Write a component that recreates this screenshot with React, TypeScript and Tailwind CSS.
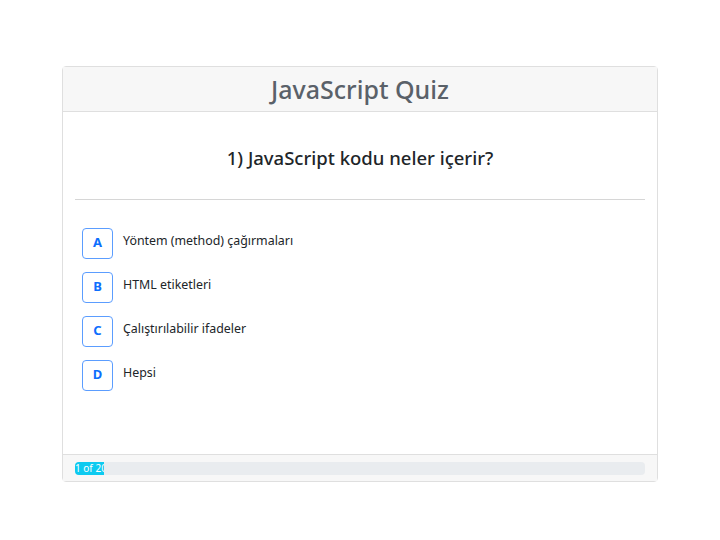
const options = [
	{ key: "A", text: "Yöntem (method) çağırmaları" },
	{ key: "B", text: "HTML etiketleri" },
	{ key: "C", text: "Çalıştırılabilir ifadeler" },
	{ key: "D", text: "Hepsi" },
];

export default function App() {
	return (
		<div
			className="min-h-[540px] bg-white pt-[66px]"
			style={{ fontFamily: '"Noto Sans", "Open Sans", sans-serif' }}
		>
			<div className="mx-auto flex h-[416px] w-[596px] flex-col rounded border border-[#dfdfdf] bg-white">
				<header className="flex h-[45px] items-center justify-center border-b border-[#dfdfdf] bg-[#f7f7f7]">
					<h1 className="text-[25px] font-medium leading-none text-[#5a6169]">
						JavaScript Quiz
					</h1>
				</header>

				<div className="flex-1 px-3">
					<h2 className="pt-[37px] text-center text-[18.5px] font-medium leading-none text-[#212529]">
						1) JavaScript kodu neler içerir?
					</h2>
					<hr className="mt-[31px] border-[#d6d6d6]" />
					<ul className="mt-[28px] flex flex-col gap-[13px] pl-[7px]">
						{options.map((o) => (
							<li key={o.key} className="flex items-start gap-[10px]">
								<button
									type="button"
									className="grid h-[31px] w-[31px] place-items-center rounded-[4px] border border-[#5b9dff] text-[13px] font-bold text-[#0d6efd]"
								>
									{o.key}
								</button>
								<span className="pt-[4px] text-[12.4px] text-[#212529]">
									{o.text}
								</span>
							</li>
						))}
					</ul>
				</div>

				<footer className="flex h-[27px] items-center border-t border-[#dfdfdf] bg-[#f7f7f7] px-3">
					<div className="flex h-[13px] w-full overflow-hidden rounded bg-[#e9ecef]">
						<div className="w-[29px] overflow-hidden whitespace-nowrap bg-[#0dcaf0] text-[10px] leading-[13px] text-white">
							1 of 20
						</div>
					</div>
				</footer>
			</div>
		</div>
	);
}
